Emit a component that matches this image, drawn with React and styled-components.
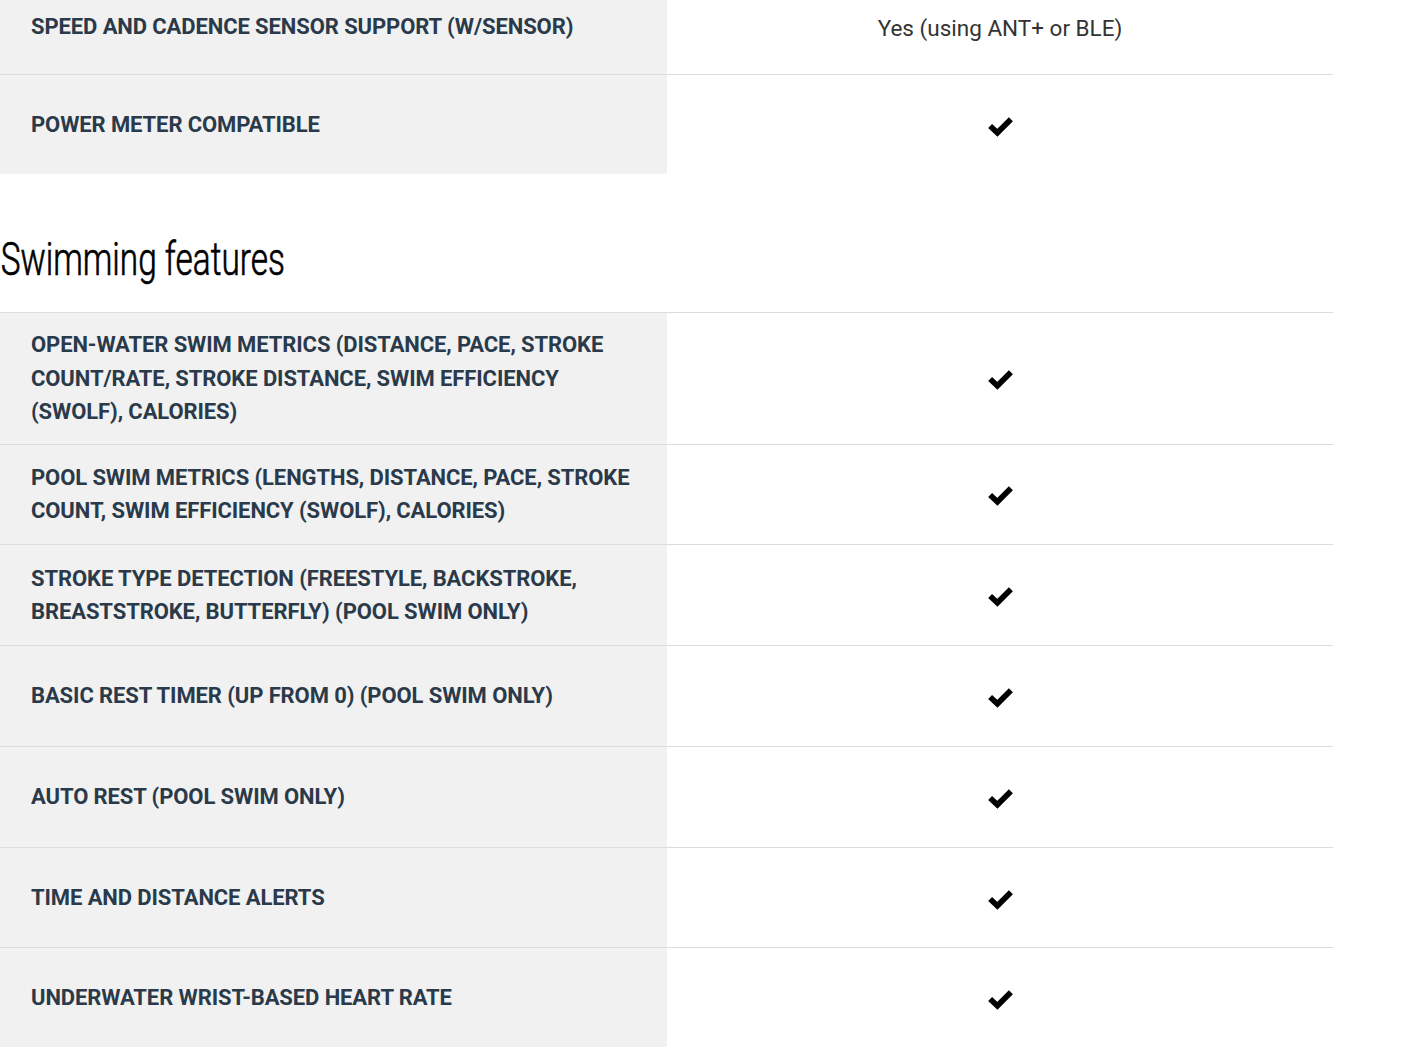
import styled, { createGlobalStyle } from "styled-components";

const GlobalStyle = createGlobalStyle`
    body {
        margin: 0;
        background: #fff;
        font-family: Roboto, "Liberation Sans", sans-serif;
    }
`;

const Page = styled.div`
    width: 1333px;
    margin-top: -20px;
`;

const Table = styled.div`
    display: flex;
    flex-direction: column;
    border-top: ${(p) => (p.$ruled ? "1px solid #dcdcdc" : "0")};
`;

const Row = styled.div`
    box-sizing: border-box;
    display: grid;
    grid-template-columns: 667px 1fr;
    min-height: ${(p) => (p.$first ? "95px" : p.$last ? "99px" : "100.8px")};
    border-bottom: ${(p) => (p.$last ? "0" : "1px solid #dcdcdc")};
`;

const Label = styled.div`
    background: #f1f1f1;
    display: flex;
    align-items: center;
    padding: 15px 30px 15px 31px;
    font-size: 22px;
    line-height: 33.5px;
    font-weight: 700;
    letter-spacing: -0.1px;
    text-transform: uppercase;
    color: #2a3a4a;
`;

const Value = styled.div`
    display: flex;
    align-items: center;
    justify-content: center;
    font-size: 22.5px;
    font-weight: 400;
    color: #333;
    padding-top: 2px;
`;

const Heading = styled.h2`
    margin: 0;
    padding: 62px 0 30px 1px;
    font-family: Roboto, "Liberation Sans", sans-serif;
    font-weight: 300;
    font-size: 47px;
    line-height: 46px;
    color: #000;
    transform: scaleX(0.71);
    transform-origin: left center;
    -webkit-text-stroke: 0.7px #000;
`;

const CheckIcon = () => (
    <svg width="27" height="22" viewBox="0 0 26 21">
        <polyline points="3,10.5 10,17 23,4" fill="none" stroke="#000" strokeWidth="5.5" strokeLinejoin="miter" />
    </svg>
);

const cycling = [
    { label: "Speed and cadence sensor support (w/sensor)", value: "Yes (using ANT+ or BLE)" },
    { label: "Power meter compatible", value: true },
];

const swimming = [
    { label: "Open-water swim metrics (distance, pace, stroke count/rate, stroke distance, swim efficiency (SWOLF), calories)", value: true },
    { label: "Pool swim metrics (lengths, distance, pace, stroke count, swim efficiency (SWOLF), calories)", value: true },
    { label: "Stroke type detection (freestyle, backstroke, breaststroke, butterfly) (pool swim only)", value: true },
    { label: "Basic rest timer (up from 0) (pool swim only)", value: true },
    { label: "Auto rest (pool swim only)", value: true },
    { label: "Time and distance alerts", value: true },
    { label: "Underwater wrist-based heart rate", value: true },
];

function FeatureRows({ items, clipped }) {
    return items.map((item, i) => (
        <Row key={item.label} $first={clipped && i === 0} $last={i === items.length - 1}>
            <Label>{item.label}</Label>
            <Value>{item.value === true ? <CheckIcon /> : item.value}</Value>
        </Row>
    ));
}

export default function App() {
    return (
        <>
            <GlobalStyle />
            <Page>
                <Table>
                    <FeatureRows items={cycling} clipped />
                </Table>
                <Heading>Swimming features</Heading>
                <Table $ruled>
                    <FeatureRows items={swimming} />
                </Table>
            </Page>
        </>
    );
}
